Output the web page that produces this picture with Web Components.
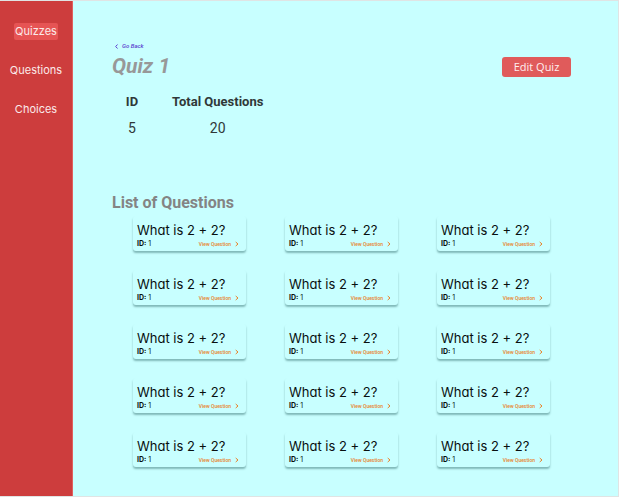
<!DOCTYPE html>
<html lang="en">
<head>
<meta charset="utf-8">
<meta name="viewport" content="width=device-width, initial-scale=1">
<title>Quiz 1</title>
<style>
  html, body { margin: 0; height: 100%; }
  body { background: #c8ffff; font-family: Roboto, sans-serif; }
</style>
</head>
<body>
<quiz-app></quiz-app>
<script>
  const define = (name, html) => {
    const template = document.createElement('template');
    template.innerHTML = html;
    customElements.define(name, class extends HTMLElement {
      constructor() {
        super();
        this.attachShadow({ mode: 'open' }).append(template.content.cloneNode(true));
      }
    });
  };

  define('nav-link', `
    <style>
      :host { display: block; }
      a { display: block; padding: 0 1px; border-radius: 2px; color: #fbeaea; text-decoration: none;
          font: 11px/17px Inter, sans-serif; font-feature-settings: "cv11"; }
      :host([active]) a { background: #e65454; }
    </style>
    <a href="#"><slot></slot></a>`);

  define('side-nav', `
    <style>
      :host { display: block; box-sizing: border-box; background: #cd3d3d; border-right: 1px solid #e0605f; }
      nav { display: flex; flex-direction: column; align-items: center; gap: 22px; padding-top: 22px; }
    </style>
    <nav aria-label="Main"><slot></slot></nav>`);

  define('back-link', `
    <style>
      :host { display: block; padding-left: 3px; font-size: 6px; line-height: 8px; }
      a { display: inline-flex; align-items: center; gap: 4px; color: #5b3fd0; text-decoration: none;
          font: italic 500 6px/8px Roboto, sans-serif; }
      svg { width: 3px; height: 5px; }
    </style>
    <a href="#"><svg viewBox="0 0 3 5" fill="none" stroke="currentColor" aria-hidden="true"><path d="M2.5.5 .7 2.5l1.8 2"/></svg><slot></slot></a>`);

  define('app-button', `
    <style>
      :host { display: block; }
      button { display: block; width: 69px; padding: 0; border: 0; border-radius: 3px; background: #e05b5b; color: #fff0f0;
               font: 11px/20px "Open Sans", sans-serif; }
    </style>
    <button type="button"><slot></slot></button>`);

  define('quiz-facts', `
    <style>
      :host { display: block; color: #303838; }
      table { border-collapse: collapse; text-align: center; }
      th, td { padding: 0; font-size: 13px; line-height: 26px; }
      td { font-size: 14px; }
      th:first-child { width: 40px; }
      th:last-child, td:last-child { padding-left: 20px; }
    </style>
    <table>
      <thead><tr><th scope="col">ID</th><th scope="col">Total Questions</th></tr></thead>
      <tbody><tr><td>5</td><td>20</td></tr></tbody>
    </table>`);

  define('question-card', `
    <style>
      :host { display: block; box-sizing: border-box; padding: 5px 7px 2px 4px; border-radius: 3px; color: #081010;
              font-family: Inter, sans-serif; box-shadow: 0 2px 2px rgba(0, 60, 60, .36); background: #c8ffff; }
      h3 { margin: 0; font: 13px/18px Inter, sans-serif; font-feature-settings: "cv11"; white-space: nowrap; }
      div { display: flex; justify-content: space-between; align-items: center; font-size: 7px; line-height: 10px; }
      a { display: flex; align-items: center; gap: 4px; color: #e8822a; text-decoration: none; font: 500 5px/8px Roboto, sans-serif; }
      svg { width: 4px; height: 6px; }
    </style>
    <h3><slot></slot></h3>
    <div>
      <span><b>ID:</b> <slot name="id"></slot></span>
      <a href="#">View Question <svg viewBox="0 0 4 6" fill="none" stroke="currentColor" aria-hidden="true"><path d="M.7 1 3 3 .7 5"/></svg></a>
    </div>`);

  define('question-grid', `
    <style>
      :host { display: grid; grid-template-columns: repeat(3, 1fr); gap: 19px 39px; padding: 0 21px; }
    </style>
    <slot></slot>`);

  define('quiz-app', `
    <style>
      :host { display: grid; grid-template-columns: 73px 1fr; box-sizing: border-box; min-height: 100vh;
              border: 1px solid #e0e4e4; border-width: 1px 1px 1px 0; }
      main { padding: 41px 47px 28px 39px; }
      header { display: flex; justify-content: space-between; align-items: center; }
      h1 { margin: 0; color: #989898; font: italic bold 21px/30px Roboto, sans-serif; }
      h2 { margin: 0; color: #848484; font: bold 16px/20px Roboto, sans-serif; }
      app-button { padding-top: 2px; }
      quiz-facts { padding: 8px 0 52px; }
      question-grid { padding-top: 3px; }
    </style>
    <side-nav>
      <nav-link active>Quizzes</nav-link>
      <nav-link>Questions</nav-link>
      <nav-link>Choices</nav-link>
    </side-nav>
    <main>
      <back-link>Go Back</back-link>
      <header><h1>Quiz 1</h1><app-button>Edit Quiz</app-button></header>
      <quiz-facts></quiz-facts>
      <h2>List of Questions</h2>
      <question-grid>
        ${'<question-card>What is 2 + 2?<span slot="id">1</span></question-card>'.repeat(15)}
      </question-grid>
    </main>`);
</script>
</body>
</html>
